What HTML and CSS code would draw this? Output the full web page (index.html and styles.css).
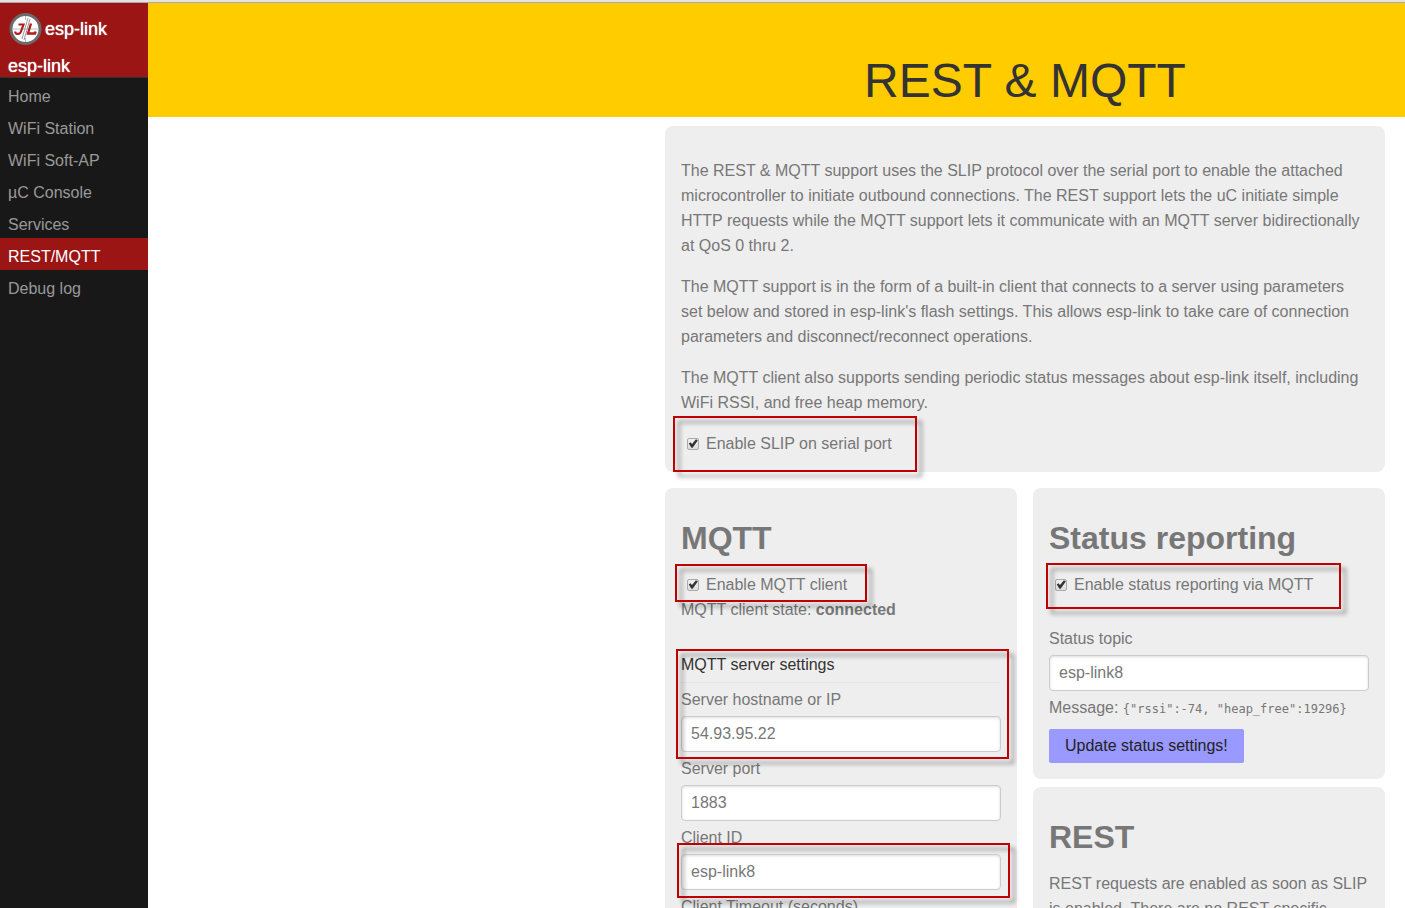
FILE: index.html
```html
<!DOCTYPE html>
<html lang="en">
<head>
<meta charset="utf-8">
<title>esp-link</title>
<link rel="stylesheet" href="styles.css">
</head>
<body>
<div class="layout">
  <nav class="menu">
    <div class="brand">
      <a class="brand-link" href="#">
        <svg class="logo" viewBox="0 0 32 32" aria-hidden="true">
          <circle cx="16" cy="16" r="14.500" fill="#fff" stroke="#6b6b6b" stroke-width="3"/>
          <path d="M3 16H29M16 3V7M16 25V29" stroke="#bbb" stroke-width="1"/>
          <path d="M18.500 5L12.500 26M20.500 6L14.500 27" stroke="#999" stroke-width="1"/>
          <path d="M9 11.500H14L11.500 18.500Q10.800 20.800 8.500 20.800H7.500Q5.500 20.800 6 18.500" fill="none" stroke="#b01c1c" stroke-width="2.200"/>
          <path d="M21.500 10.500L18.500 20.500H25.500L26.200 18.500" fill="none" stroke="#b01c1c" stroke-width="2.300"/>
        </svg>
        <span>esp-link</span>
      </a>
      <div class="brand-name">esp-link</div>
    </div>
    <ul class="menu-list">
      <li><a class="menu-link" href="#">Home</a></li>
      <li><a class="menu-link" href="#">WiFi Station</a></li>
      <li><a class="menu-link" href="#">WiFi Soft-AP</a></li>
      <li><a class="menu-link" href="#">µC Console</a></li>
      <li><a class="menu-link" href="#">Services</a></li>
      <li><a class="menu-link selected" href="#" aria-current="page">REST/MQTT</a></li>
      <li><a class="menu-link" href="#">Debug log</a></li>
    </ul>
  </nav>
  <main class="main">
    <header class="header">
      <h1 class="title">REST &amp; MQTT</h1>
    </header>
    <div class="content">
      <section class="card">
        <p>The REST &amp; MQTT support uses the SLIP protocol over the serial port to enable the attached microcontroller to initiate outbound connections. The REST support lets the uC initiate simple HTTP requests while the MQTT support lets it communicate with an MQTT server bidirectionally at QoS 0 thru 2.</p>
        <p>The MQTT support is in the form of a built-in client that connects to a server using parameters set below and stored in esp-link's flash settings. This allows esp-link to take care of connection parameters and disconnect/reconnect operations.</p>
        <p>The MQTT client also supports sending periodic status messages about esp-link itself, including WiFi RSSI, and free heap memory.</p>
        <div class="marked">
          <label class="check"><input type="checkbox" checked>Enable SLIP on serial port</label>
          <span class="mark mark-slip"></span>
        </div>
      </section>
      <div class="columns">
        <section class="card">
          <h2>MQTT</h2>
          <div class="marked">
            <label class="check"><input type="checkbox" checked>Enable MQTT client</label>
            <span class="mark mark-client"></span>
          </div>
          <div>MQTT client state: <b>connected</b></div>
          <form class="settings">
            <div class="marked">
              <div class="legend">MQTT server settings</div>
              <label class="field" for="host">Server hostname or IP</label>
              <input class="text" id="host" type="text" value="54.93.95.22">
              <span class="mark mark-server"></span>
            </div>
            <label class="field" for="port">Server port</label>
            <input class="text" id="port" type="text" value="1883">
            <label class="field" for="client">Client ID</label>
            <div class="marked">
              <input class="text" id="client" type="text" value="esp-link8">
              <span class="mark mark-id"></span>
            </div>
            <label class="field" for="timeout">Client Timeout (seconds)</label>
            <input class="text" id="timeout" type="text">
          </form>
        </section>
        <div class="stack">
          <section class="card">
            <h2>Status reporting</h2>
            <div class="marked">
              <label class="check"><input type="checkbox" checked>Enable status reporting via MQTT</label>
              <span class="mark mark-status"></span>
            </div>
            <form class="status-form">
              <label class="field" for="topic">Status topic</label>
              <input class="text" id="topic" type="text" value="esp-link8">
              <div>Message: <code>{"rssi":-74, "heap_free":19296}</code></div>
              <button class="button" type="button">Update status settings!</button>
            </form>
          </section>
          <section class="card">
            <h2>REST</h2>
            <p>REST requests are enabled as soon as SLIP is enabled. There are no REST specific</p>
          </section>
        </div>
      </div>
    </div>
  </main>
</div>
</body>
</html>
```
FILE: styles.css
```css
* { box-sizing: border-box; }

body {
  margin: 0;
  border-top: 2px solid #e4e4e4;
  background: #fff;
  color: #777;
  font: 16px/25px "Liberation Sans", Arial, sans-serif;
}

.layout {
  display: flex;
  height: calc(100vh - 2px);
  overflow: hidden;
  border-top: 1px solid #aaa;
}

.menu {
  flex: 0 0 148px;
  background: #191818;
}

.brand {
  padding: 10px 8px 0;
  border-bottom: 1px solid #333;
  background: #9b1515;
  color: #fff;
  font-size: 18px;
  text-shadow: 0 0 1px #fff;
}

.brand-link {
  display: flex;
  align-items: center;
  gap: 3px;
  padding-left: 1px;
  color: #fff;
  text-decoration: none;
}

.logo { width: 33px; height: 32px; }

.brand-name { padding-top: 10px; line-height: 22px; }

.menu-list { margin: 0; padding: 0; list-style: none; }

.menu-link {
  display: block;
  padding: 10px 8px 4px;
  color: #999;
  line-height: 18px;
  text-decoration: none;
}

.menu-link.selected { background: #9b1515; color: #fff; }

.main { flex: 1; min-width: 0; }

.header {
  display: flex;
  justify-content: flex-end;
  padding: 50px 20px 8px;
  background: #fc0;
}

.title {
  width: 720px;
  margin: 0;
  color: #333;
  font-size: 48px;
  font-weight: 400;
  line-height: 56px;
  text-align: center;
}

.content {
  display: grid;
  gap: 16px;
  max-width: 740px;
  margin: 9px 0 0 auto;
  padding-right: 20px;
}

.columns {
  display: grid;
  grid-template-columns: 1fr 1fr;
  gap: 16px;
}

.stack { display: flex; flex-direction: column; gap: 8px; }

.card {
  padding: 16px;
  border-radius: 8px;
  background: #eee;
}

.card p { margin: 16px 0; }

h2 {
  margin: 16px 0;
  font-size: 32px;
  line-height: 36px;
}

.check { display: flex; align-items: center; }

.check input {
  appearance: none;
  display: grid;
  width: 12px;
  height: 12px;
  margin: 0 7px 0 6px;
  border: 1px solid #aaa;
  border-radius: 2px;
  background: linear-gradient(#f0f0f0, #ddd);
}

.check input:checked::before {
  content: "";
  background: #333;
  clip-path: polygon(8% 50%, 24% 38%, 40% 56%, 80% 8%, 98% 20%, 46% 92%, 34% 92%);
}

.marked { position: relative; }

.mark {
  position: absolute;
  border: 2px solid #c00000;
  filter: drop-shadow(5px 5px 2px rgba(0, 0, 0, .4));
  pointer-events: none;
}

.mark-slip { top: -15px; left: -8px; width: 244px; height: 56px; }
.mark-client { top: -8px; left: -6px; width: 192px; height: 38px; }
.mark-server { top: -3px; left: -5px; width: 333px; height: 110px; }
.mark-id { top: -11px; left: -4px; width: 333px; height: 55px; }
.mark-status { top: -9px; left: -3px; width: 295px; height: 46px; }

.settings { margin-top: 30px; }

.legend {
  margin-bottom: 4px;
  padding-bottom: 5px;
  border-bottom: 1px solid #e5e5e5;
  color: #333;
}

.field { display: block; }

.text {
  display: block;
  width: 100%;
  height: 36px;
  margin: 4px 0;
  padding: 0 9px;
  border: 1px solid #ccc;
  border-radius: 4px;
  background: #fff;
  box-shadow: inset 0 1px 3px #ddd;
  color: #777;
  font: inherit;
}

.status-form { margin-top: 29px; }

code { font: 12px "DejaVu Sans Mono", monospace; }

.button {
  display: block;
  margin-top: 9px;
  padding: 0 16px;
  border: 0;
  border-radius: 2px;
  background: #99f;
  color: #222;
  font: inherit;
  line-height: 34px;
}
```
